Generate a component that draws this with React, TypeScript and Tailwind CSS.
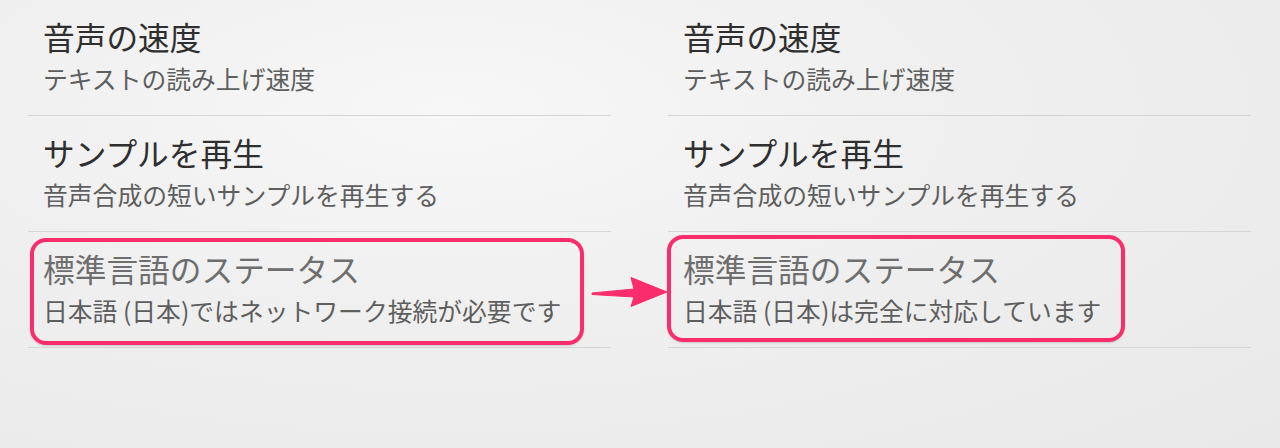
import React from "react";

type Item = { title: string; sub: string; dim?: boolean };

const leftItems: Item[] = [
  { title: "音声の速度", sub: "テキストの読み上げ速度" },
  { title: "サンプルを再生", sub: "音声合成の短いサンプルを再生する" },
  { title: "標準言語のステータス", sub: "日本語 (日本)ではネットワーク接続が必要です", dim: true },
];

const rightItems: Item[] = [
  { title: "音声の速度", sub: "テキストの読み上げ速度" },
  { title: "サンプルを再生", sub: "音声合成の短いサンプルを再生する" },
  { title: "標準言語のステータス", sub: "日本語 (日本)は完全に対応しています", dim: true },
];

function Row({ item, children }: { item: Item; children?: React.ReactNode }) {
  return (
    <div className="relative h-[116px] border-b border-[#d6d6d6] pl-[15px] pt-[18px]">
      <div
        className={
          "text-[31.7px] leading-[36px] whitespace-nowrap " +
          (item.dim ? "text-[#6e6e6e]" : "text-[#2f2f2f]")
        }
      >
        {item.title}
      </div>
      <div className="mt-[10px] text-[24.8px] leading-[28px] text-[#5e5e5e] whitespace-nowrap">
        {item.sub}
      </div>
      {children}
    </div>
  );
}

function Panel({ items, box }: { items: Item[]; box: string }) {
  return (
    <div className="w-[640px] pl-[28px] pr-[29px]">
      <Row item={items[0]} />
      <Row item={items[1]} />
      <Row item={items[2]}>
        <div className={box} />
      </Row>
    </div>
  );
}

export default function App() {
  return (
    <div
      className="relative flex h-[448px] w-[1280px] overflow-hidden bg-[#ededed] bg-[radial-gradient(ellipse_at_35%_25%,#f7f7f7_0%,#efefef_45%,#e9e9e9_100%)]"
      style={{ fontFamily: '"Noto Sans CJK JP", "Noto Sans", sans-serif' }}
    >
      <Panel
        items={leftItems}
        box="absolute left-[2px] top-[6px] h-[107px] w-[554px] rounded-[16px] border-[4px] border-[#fa2d6c] shadow-[0_1px_2px_rgba(0,0,0,0.15)]"
      />
      <Panel
        items={rightItems}
        box="absolute left-[-1px] top-[3px] h-[107px] w-[458px] rounded-[16px] border-[4px] border-[#fa2d6c] shadow-[0_1px_2px_rgba(0,0,0,0.15)]"
      />
      <svg
        className="absolute left-[590px] top-[274px]"
        width="80"
        height="36"
        viewBox="0 0 80 36"
      >
        <path
          d="M2 19 L44 15 L41 3.5 L77 18 L41 32.5 L44 23 L2 20.5 Z"
          fill="#fa2d6c"
          stroke="#fa2d6c"
          strokeWidth="1"
          strokeLinejoin="round"
        />
      </svg>
    </div>
  );
}
